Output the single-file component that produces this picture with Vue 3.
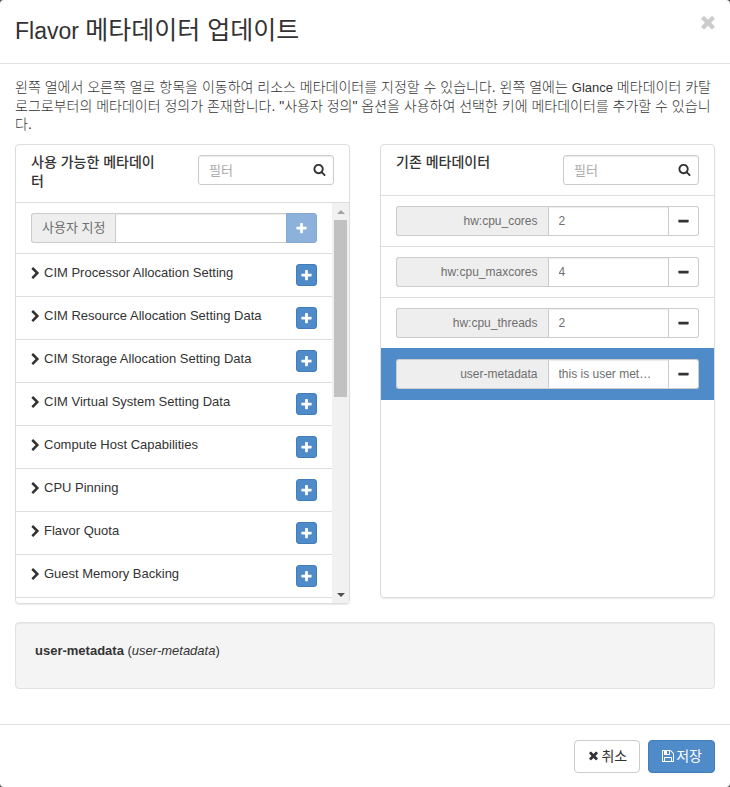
<script setup>
import { h, ref } from 'vue'

const iconPaths = {
  plus: 'M1600 736v192q0 40-28 68t-68 28h-416v416q0 40-28 68t-68 28h-192q-40 0-68-28t-28-68v-416h-416q-40 0-68-28t-28-68v-192q0-40 28-68t68-28h416v-416q0-40 28-68t68-28h192q40 0 68 28t28 68v416h416q40 0 68 28t28 68z',
  minus: 'M1600 736v192q0 40-28 68t-68 28h-1216q-40 0-68-28t-28-68v-192q0-40 28-68t68-28h1216q40 0 68 28t28 68z',
  times: 'M1490 1322q0 40-28 68l-136 136q-28 28-68 28t-68-28l-294-294-294 294q-28 28-68 28t-68-28l-136-136q-28-28-28-68t28-68l294-294-294-294q-28-28-28-68t28-68l136-136q28-28 68-28t68 28l294 294 294-294q28-28 68-28t68 28l136 136q28 28 28 68t-28 68l-294 294 294 294q28 28 28 68z',
  search: 'M1216 832q0-185-131.5-316.5t-316.5-131.5-316.5 131.5-131.5 316.5 131.5 316.5 316.5 131.5 316.5-131.5 131.5-316.5zm512 832q0 52-38 90t-90 38q-54 0-90-38l-343-342q-179 124-399 124-143 0-273.5-55.5t-225-150-150-225-55.5-273.5 55.5-273.5 150-225 225-150 273.5-55.5 273.5 55.5 225 150 150 225 55.5 273.5q0 220-124 399l343 343q37 37 37 90z',
  chevron: 'M1363 877l-742 742q-19 19-45 19t-45-19l-166-166q-19-19-19-45t19-45l531-531-531-531q-19-19-19-45t19-45l166-166q19-19 45-19t45 19l742 742q19 19 19 45t-19 45z',
  save: 'M512 1536h768v-384h-768v384zm896 0h128v-896q0-14-10-38.5t-20-34.5l-281-281q-10-10-34-20t-39-10v416q0 40-28 68t-68 28h-576q-40 0-68-28t-28-68v-416h-128v1280h128v-416q0-40 28-68t68-28h832q40 0 68 28t28 68v416zm-384-928v-320q0-13-9.5-22.5t-22.5-9.5h-192q-13 0-22.5 9.5t-9.5 22.5v320q0 13 9.5 22.5t22.5 9.5h192q13 0 22.5-9.5t9.5-22.5zm640 32v928q0 40-28 68t-68 28h-1344q-40 0-68-28t-28-68v-1344q0-40 28-68t68-28h928q40 0 88 20t76 48l280 280q28 28 48 76t20 88z'
}

const Icon = (props) =>
  h('svg', { viewBox: '0 0 1792 1792', fill: 'currentColor', 'aria-hidden': 'true' }, [
    h('path', { d: iconPaths[props.name] })
  ])
Icon.props = ['name']

const available = [
  'CIM Processor Allocation Setting',
  'CIM Resource Allocation Setting Data',
  'CIM Storage Allocation Setting Data',
  'CIM Virtual System Setting Data',
  'Compute Host Capabilities',
  'CPU Pinning',
  'Flavor Quota',
  'Guest Memory Backing'
]

const existing = ref([
  { key: 'hw:cpu_cores', value: '2' },
  { key: 'hw:cpu_maxcores', value: '4' },
  { key: 'hw:cpu_threads', value: '2' },
  { key: 'user-metadata', value: 'this is user metadata' }
])
const selected = ref('user-metadata')
const customKey = ref('')
const availableFilter = ref('')
const existingFilter = ref('')
</script>

<template>
  <div class="modal">
    <header class="modal-header">
      <h1 class="modal-title"><span class="latin">Flavor </span>메타데이터 업데이트</h1>
      <button class="close" type="button" aria-label="닫기"><Icon name="times" class="icon-close" /></button>
    </header>

    <main class="modal-body">
      <p class="help">왼쪽 열에서 오른쪽 열로 항목을 이동하여 리소스 메타데이터를 지정할 수 있습니다. 왼쪽 열에는 <span class="latin">Glance</span> 메타데이터 카탈로그로부터의 메타데이터 정의가 존재합니다. "사용자 정의" 옵션을 사용하여 선택한 키에 메타데이터를 추가할 수 있습니다.</p>

      <div class="columns">
        <section class="panel">
          <div class="panel-heading">
            <h2 class="panel-title">사용 가능한 메타데이터</h2>
            <div class="filter">
              <input v-model="availableFilter" class="field" type="text" placeholder="필터" aria-label="사용 가능한 메타데이터 필터" />
              <Icon name="search" class="icon filter-icon" />
            </div>
          </div>
          <div class="scroll-area">
            <ul class="list">
              <li class="item">
                <div class="group custom">
                  <label class="addon korean" for="custom-key">사용자 지정</label>
                  <input id="custom-key" v-model="customKey" class="field" type="text" />
                  <button class="group-btn primary" type="button" disabled aria-label="추가"><Icon name="plus" class="icon" /></button>
                </div>
              </li>
              <li v-for="name in available" :key="name" class="item namespace">
                <a href="#" class="toggle"><Icon name="chevron" class="icon chevron" />{{ name }}</a>
                <button class="add primary" type="button" :aria-label="name + ' 추가'"><Icon name="plus" class="icon" /></button>
              </li>
              <li class="item"></li>
            </ul>
            <div class="scrollbar" aria-hidden="true">
              <span class="arrow up"></span>
              <span class="thumb"></span>
              <span class="arrow down"></span>
            </div>
          </div>
        </section>

        <section class="panel">
          <div class="panel-heading">
            <h2 class="panel-title">기존 메타데이터</h2>
            <div class="filter">
              <input v-model="existingFilter" class="field" type="text" placeholder="필터" aria-label="기존 메타데이터 필터" />
              <Icon name="search" class="icon filter-icon" />
            </div>
          </div>
          <ul class="list existing">
            <li v-for="row in existing" :key="row.key" class="item" :class="{ active: row.key === selected }" @click="selected = row.key">
              <div class="group">
                <label class="addon half" :for="row.key">{{ row.key }}</label>
                <input :id="row.key" v-model="row.value" class="field" type="text" />
                <button class="group-btn" type="button" :aria-label="row.key + ' 제거'"><Icon name="minus" class="icon" /></button>
              </div>
            </li>
          </ul>
        </section>
      </div>

      <div class="well"><strong>{{ selected }}</strong> (<em>{{ selected }}</em>)</div>
    </main>

    <footer class="modal-footer">
      <button class="btn" type="button"><Icon name="times" class="icon" />취소</button>
      <button class="btn primary" type="button"><Icon name="save" class="icon icon-save" />저장</button>
    </footer>
  </div>
</template>

<style>
body {
  margin: 0;
  background: #555;
}
</style>

<style scoped>
* {
  box-sizing: border-box;
}
.modal {
  min-height: 100vh;
  display: flex;
  flex-direction: column;
  background: #fff;
  border-radius: 4px;
  color: #333;
  font-family: "Liberation Sans", "Noto Sans CJK KR", sans-serif;
  font-size: 13px;
  line-height: 18px;
}
button,
input {
  font-family: inherit;
  color: inherit;
  margin: 0;
}
button {
  display: flex;
  align-items: center;
  justify-content: center;
  padding: 0;
  cursor: pointer;
}
.icon {
  width: 13px;
  height: 13px;
  flex: none;
}
.icon-save {
  width: 14px;
  height: 14px;
}
.modal-header {
  display: flex;
  justify-content: space-between;
  align-items: flex-start;
  padding: 14px 15px 15px;
  border-bottom: 1px solid #e1e1e1;
}
.modal-title {
  margin: 0;
  font-size: 25px;
  line-height: 33px;
  font-weight: 400;
}
.modal-title .latin {
  font-size: 23px;
}
.close {
  border: 0;
  background: none;
  color: #ccc;
  height: 16px;
  width: 15px;
}
.icon-close {
  width: 20px;
  height: 20px;
  flex: none;
}
.modal-body {
  padding: 14px 15px 15px;
  flex: 1;
}
.help {
  margin: 0 0 11px;
  font-size: 14px;
  font-weight: 300;
}
.help .latin {
  font-size: 13px;
}
.columns {
  display: grid;
  grid-template-columns: 1fr 1fr;
  gap: 30px;
  align-items: start;
  margin-bottom: 18px;
}
.panel {
  min-width: 0;
  border: 1px solid #ddd;
  border-radius: 4px;
  box-shadow: 0 1px 1px rgba(0, 0, 0, 0.08);
  overflow: hidden;
}
.panel-heading {
  display: grid;
  grid-template-columns: 1fr 136px;
  gap: 32px;
  align-items: start;
  padding: 8px 15px 10px;
  border-bottom: 1px solid #ddd;
}
.panel-title {
  margin: 0 0 1px;
  font-size: 14px;
  line-height: 19px;
  font-weight: 500;
}
.filter {
  position: relative;
  margin-top: 2px;
}
.filter-icon {
  position: absolute;
  right: 8px;
  top: 8px;
}
.field {
  display: block;
  width: 100%;
  min-width: 0;
  height: 30px;
  padding: 5px 14px 5px 10px;
  border: 1px solid #ccc;
  border-radius: 3px;
  background: #fff;
  box-shadow: inset 0 1px 1px rgba(0, 0, 0, 0.08);
  color: #6e6e6e;
  font-size: 12px;
  line-height: 18px;
  text-overflow: ellipsis;
  outline: none;
}
.filter .field {
  font-size: 13px;
  padding-right: 28px;
}
.field::placeholder {
  color: #aaa;
}
.scroll-area {
  display: flex;
  height: 400px;
}
.list {
  flex: 1;
  min-width: 0;
  margin: 0;
  padding: 0;
  list-style: none;
  overflow: hidden;
}
.existing {
  height: 401px;
}
.item {
  padding: 10px 15px;
  border-bottom: 1px solid #ddd;
}
.item.active {
  margin-top: -1px;
  background: #4f8ac9;
  border-top: 1px solid #4f8ac9;
  border-color: #4f8ac9;
}
.namespace {
  display: flex;
  justify-content: space-between;
  align-items: flex-start;
}
.toggle {
  display: flex;
  align-items: center;
  color: inherit;
  text-decoration: none;
}
.chevron {
  margin-left: -2px;
  margin-right: 2px;
}
.add {
  width: 21px;
  height: 22px;
  border: 1px solid #427cba;
  border-radius: 3px;
}
.primary {
  background: #4f8ac9;
  border-color: #427cba;
  color: #fff;
}
.group {
  display: flex;
}
.addon {
  flex: none;
  height: 30px;
  padding: 5px 10px;
  border: 1px solid #ccc;
  border-right: 0;
  border-radius: 3px 0 0 3px;
  background: #eee;
  color: #6e6e6e;
  font-size: 12px;
}
.half {
  width: 50%;
  text-align: right;
}
.korean {
  font-size: 13px;
}
.group .field {
  flex: 1;
  border-radius: 0;
}
.custom .field {
  border-right: 0;
}
.group-btn {
  flex: none;
  width: 30px;
  height: 30px;
  border: 1px solid #ccc;
  border-left: 0;
  border-radius: 0 3px 3px 0;
  background: #fff;
  color: #333;
}
.group-btn.primary {
  width: 31px;
  border: 1px solid #427cba;
  background: #4f8ac9;
  color: #fff;
}
.group-btn:disabled {
  opacity: 0.65;
}
.scrollbar {
  flex: none;
  width: 17px;
  display: flex;
  flex-direction: column;
  align-items: center;
  background: #f1f1f1;
}
.arrow {
  border: 4px solid transparent;
}
.arrow.up {
  margin: 3px 0 6px;
  border-bottom-color: #a3a3a3;
}
.arrow.down {
  margin: auto 0 2px;
  border-top-color: #505050;
}
.thumb {
  width: 13px;
  height: 177px;
  background: #c1c1c1;
}
.well {
  min-height: 67px;
  padding: 19px;
  border: 1px solid #e1e1e1;
  border-radius: 4px;
  background: #f4f4f4;
  box-shadow: inset 0 1px 1px rgba(0, 0, 0, 0.05);
}
.modal-footer {
  display: flex;
  justify-content: flex-end;
  gap: 8px;
  padding: 15px 15px 14px;
  border-top: 1px solid #e1e1e1;
}
.btn {
  height: 33px;
  padding: 0 12px 2px;
  gap: 1px;
  border: 1px solid #ccc;
  border-radius: 4px;
  background: #fff;
  font-size: 14px;
  line-height: 18px;
}
.btn.primary {
  background: #4f8ac9;
  border-color: #427cba;
  color: #fff;
}
</style>
